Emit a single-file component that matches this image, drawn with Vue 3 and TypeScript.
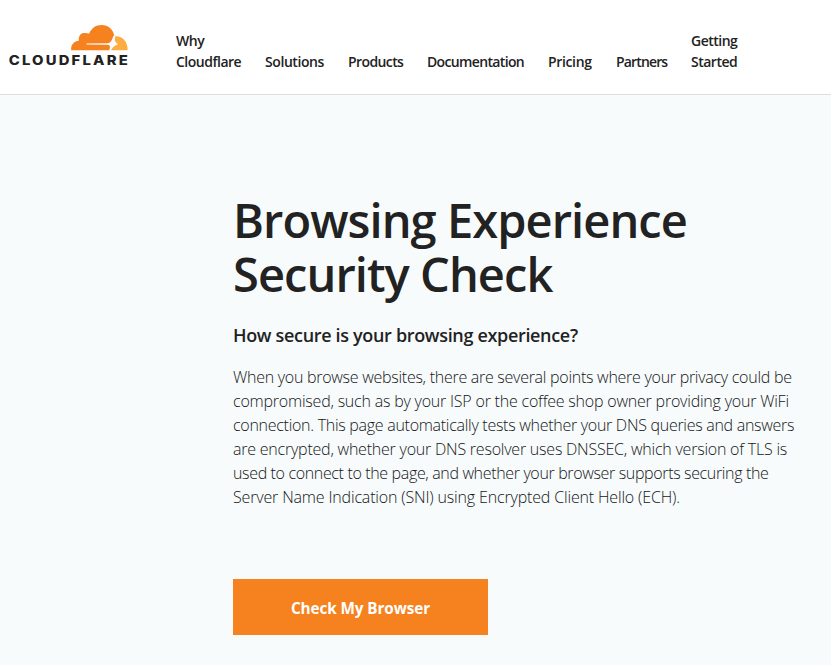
<script setup lang="ts">
interface NavItem {
  label: string
  key: string
}

const navItems: NavItem[] = [
  { label: 'Why Cloudflare', key: 'why' },
  { label: 'Solutions', key: 'solutions' },
  { label: 'Products', key: 'products' },
  { label: 'Documentation', key: 'documentation' },
  { label: 'Pricing', key: 'pricing' },
  { label: 'Partners', key: 'partners' },
  { label: 'Getting Started', key: 'getting' },
]

const bodyLines: string[] = [
  'When you browse websites, there are several points where your privacy could be',
  'compromised, such as by your ISP or the coffee shop owner providing your WiFi',
  'connection. This page automatically tests whether your DNS queries and answers',
  'are encrypted, whether your DNS resolver uses DNSSEC, which version of TLS is',
  'used to connect to the page, and whether your browser supports securing the',
  'Server Name Indication (SNI) using Encrypted Client Hello (ECH).',
]
</script>

<template>
  <div class="page">
    <header class="header">
      <svg class="logo" viewBox="0 0 124 46" role="img" aria-label="Cloudflare">
        <path
          class="cloud"
          d="M62.2 26.2C61.6 21.5 64.3 17.3 69.9 16.8C69.4 12.6 71.2 9.7 74.7 9.1C76.7 8.8 78.5 9 80.1 9.8C82.2 4.4 86.7 1 92.7 1C99 1 104.6 5.4 105.4 12.4L103.1 18.4L101 26.2Z"
        />
        <path
          class="cloud-light"
          d="M106 12.2C113.3 11.6 119.1 17.7 118.6 26.2H102L104.3 18.4Z"
        />
        <path class="cut" d="M77.5 19.5L98.8 19.3C101.8 18.8 103.6 15.5 104.2 12H106.2C105.3 15.5 105.6 18.2 109.2 20.2C105.3 21.2 103.5 23.5 101.8 26.3H100.2C101.4 23.4 101.3 20.9 98.8 20.7L77.5 20.6Z" />
        <text class="wordmark" x="-0.3" y="40.8" textLength="121.2" lengthAdjust="spacingAndGlyphs">CLOUDFLARE</text>
      </svg>
      <nav class="nav">
        <a v-for="item in navItems" :key="item.key" class="nav-item" :class="item.key">{{ item.label }}</a>
      </nav>
    </header>
    <main class="content">
      <h1 class="title">Browsing Experience<br />Security Check</h1>
      <h2 class="subtitle">How secure is your browsing experience?</h2>
      <p class="copy">
        <span v-for="(line, i) in bodyLines" :key="i" class="line" :class="`line-${i}`">{{ line }}</span>
      </p>
      <button class="cta" type="button">Check My Browser</button>
    </main>
  </div>
</template>

<style>
body {
  margin: 0;
  background: #f7fbfc;
}
</style>

<style scoped>
.page {
  height: 665px;
  overflow: hidden;
  color: #222;
  background: #f7fbfc;
  font-family: 'Open Sans', 'Noto Sans', sans-serif;
}
.header {
  display: flex;
  box-sizing: border-box;
  height: 95px;
  padding: 24px 0 0 9px;
  background: #fff;
  border-bottom: 1px solid #dcdfe0;
}
.logo {
  flex: none;
  width: 124px;
  height: 46px;
}
.cloud {
  fill: #f6821f;
}
.cloud-light {
  fill: #fbad41;
}
.cut {
  fill: #fff;
}
.wordmark {
  fill: #222;
  font: 800 13.4px Inter, sans-serif;
  letter-spacing: 2px;
}
.nav {
  display: grid;
  grid-template-columns: 89px 83px 79px 121px 68px 75px 50px;
  align-items: end;
  height: 48px;
  margin-left: 43px;
}
.nav-item {
  font-size: 14px;
  line-height: 21px;
  font-weight: 600;
  letter-spacing: -0.5px;
}
.why {
  padding-right: 24px;
}
.solutions {
  letter-spacing: -0.42px;
}
.products {
  letter-spacing: -0.6px;
}
.documentation {
  letter-spacing: -0.65px;
}
.pricing {
  letter-spacing: -0.35px;
}
.partners {
  letter-spacing: -0.85px;
}
.content {
  padding: 98px 0 0 233px;
}
.title {
  margin: 0;
  font-size: 47px;
  line-height: 54px;
  font-weight: 600;
  letter-spacing: -0.93px;
  white-space: nowrap;
}
.subtitle {
  margin: 22px 0 0;
  font-size: 18px;
  line-height: 24px;
  font-weight: 550;
  letter-spacing: -0.33px;
  white-space: nowrap;
}
.copy {
  margin: 18px 0 0;
  color: #161616;
  font-size: 16px;
  line-height: 24px;
  font-weight: 300;
}
.line {
  display: block;
  width: max-content;
  white-space: nowrap;
}
.line-0 {
  letter-spacing: -0.27px;
}
.line-1 {
  letter-spacing: -0.21px;
}
.line-2 {
  letter-spacing: -0.28px;
}
.line-3 {
  letter-spacing: -0.22px;
}
.line-4 {
  letter-spacing: -0.35px;
}
.line-5 {
  letter-spacing: -0.16px;
}
.cta {
  display: block;
  width: 255px;
  height: 56px;
  margin: 70px 0 0;
  padding: 2px 0 0;
  border: 0;
  color: #fff;
  background: #f6821f;
  font: 700 15.3px/24px 'Open Sans', 'Noto Sans', sans-serif;
  letter-spacing: -0.1px;
}
</style>
